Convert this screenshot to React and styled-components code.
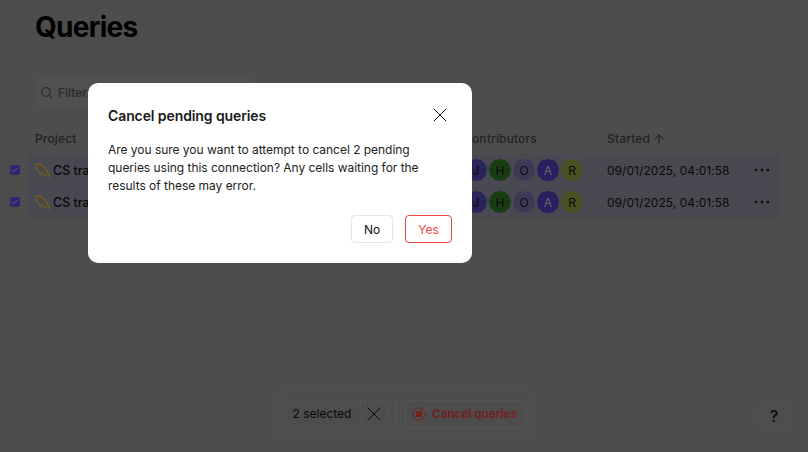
import React from 'react';
import styled, { createGlobalStyle } from 'styled-components';
import { ArrowUp, MoreHorizontal, Search, X, Check } from 'lucide-react';

const GlobalStyle = createGlobalStyle`
  html, body { margin: 0; padding: 0; height: 100%; overflow: hidden; background: #9a9a9a; }
  body { font-family: Inter, "Liberation Sans", sans-serif; color: #111; }
`;

const Page = styled.div`
  width: 808px;
  height: 452px;
  overflow: hidden;
  position: relative;
  background: #9a9a9a;
`;
const Title = styled.h1`
  margin: 0;
  padding: 10px 0 0 35px;
  font-size: 28px;
  line-height: 34px;
  font-weight: 700;
  letter-spacing: -0.7px;
  color: #000;
`;
const FilterBox = styled.div`
  margin: 34px 0 0 35px;
  width: 220px;
  height: 28px;
  box-sizing: border-box;
  display: flex;
  align-items: center;
  gap: 5px;
  padding-left: 5px;
  background: #a1a1a1;
  border-radius: 5px;
  font-size: 12px;
  font-weight: 500;
  color: #555;
`;
const HeaderRow = styled.div`
  display: grid;
  grid-template-columns: 428px 144px 1fr;
  margin-top: 23px;
  padding-left: 35px;
  height: 19px;
  align-items: center;
  font-size: 12px;
  font-weight: 500;
  letter-spacing: 0.15px;
  color: #444;
`;
const Started = styled.span`
  display: flex;
  align-items: center;
  gap: 2px;
  svg { color: #222; }
`;
const TableBody = styled.div`
  display: flex;
  margin-top: 6px;
`;
const Checks = styled.div`
  width: 27px;
  flex: none;
  display: flex;
  flex-direction: column;
`;
const CheckCell = styled.div`
  height: 32px;
  padding-left: 10px;
  display: flex;
  align-items: center;
`;
const CheckBox = styled.span`
  width: 10px;
  height: 10px;
  border-radius: 2px;
  background: #5a50e8;
  color: #ccc;
  display: flex;
  align-items: center;
  justify-content: center;
`;
const Rows = styled.div`
  width: 755px;
  background: #9292a2;
  border-radius: 5px;
`;
const Row = styled.div`
  display: grid;
  grid-template-columns: 428px 144px 1fr 32px;
  height: 32px;
  padding-left: 8px;
  align-items: center;
  font-size: 12px;
  color: #111;
`;
const NameCell = styled.div`
  display: flex;
  align-items: center;
  gap: 3px;
  font-weight: 500;
  font-size: 12.5px;
`;
const Avatars = styled.div`
  display: flex;
  margin-left: 1px;
`;
const Avatar = styled.span`
  width: 24px;
  height: 24px;
  box-sizing: border-box;
  border: 1px solid #9a9aa6;
  border-radius: 50%;
  background: ${(p) => p.$bg};
  color: ${(p) => p.$fg || '#111'};
  font-size: 12px;
  display: flex;
  align-items: center;
  justify-content: center;
`;
const DateCell = styled.span`
  font-size: 12px;
  letter-spacing: 0.05px;
`;
const MoreCell = styled.span`
  display: flex;
  margin-left: 2px;
  color: #111;
`;
const ActionBar = styled.div`
  position: absolute;
  left: 275px;
  bottom: 16px;
  height: 45px;
  width: 260px;
  box-sizing: border-box;
  display: flex;
  align-items: center;
  gap: 8px;
  padding: 0 7px;
  background: #9a9a9a;
  border: 1px solid #a2a2a2;
  border-radius: 10px;
`;
const SelectedGroup = styled.div`
  display: flex;
  align-items: stretch;
  height: 28px;
  box-sizing: border-box;
  border: 1px dashed #a8a8a8;
  border-radius: 5px;
  font-size: 12px;
  color: #111;
`;
const SelectedLabel = styled.span`
  width: 76px;
  display: flex;
  align-items: center;
  justify-content: center;
  border-right: 1px dashed #a8a8a8;
`;
const ClearButton = styled.span`
  width: 26px;
  box-sizing: border-box;
  padding-right: 1px;
  display: flex;
  align-items: center;
  justify-content: center;
  overflow: hidden;
`;
const Divider = styled.span`
  width: 1px;
  height: 28px;
  background: #a8a8a8;
`;
const CancelButton = styled.div`
  height: 28px;
  width: 122px;
  box-sizing: border-box;
  display: flex;
  align-items: center;
  gap: 6px;
  padding-left: 6px;
  border: 1px solid #a8a8a8;
  border-radius: 5px;
  font-size: 12px;
  font-weight: 600;
  letter-spacing: -0.15px;
  color: #e83c3c;
`;
const HelpButton = styled.div`
  position: absolute;
  right: 18px;
  bottom: 20px;
  width: 32px;
  height: 32px;
  box-sizing: border-box;
  border: 1px solid #a2a2a2;
  border-radius: 50%;
  display: flex;
  align-items: center;
  justify-content: center;
  font-size: 16px;
  font-weight: 500;
  color: #111;
`;
const Overlay = styled.div`
  position: fixed;
  inset: 0;
  background: rgba(0, 0, 0, 0.5);
  display: flex;
  align-items: flex-start;
  padding: 83px 0 0 88px;
`;
const Modal = styled.div`
  width: 384px;
  height: 180px;
  box-sizing: border-box;
  background: #fff;
  border-radius: 10px;
  padding: 24px 20px 20px;
  display: flex;
  flex-direction: column;
`;
const ModalHeader = styled.div`
  display: flex;
  justify-content: space-between;
  align-items: center;
  height: 18px;
`;
const ModalTitle = styled.h2`
  margin: 0;
  font-size: 14px;
  line-height: 18px;
  font-weight: 600;
  letter-spacing: -0.1px;
  color: #1a1a1a;
`;
const CloseButton = styled.span`
  display: flex;
  margin-top: -2px;
  color: #111;
`;
const ModalText = styled.p`
  margin: 16px 0 0;
  font-size: 12px;
  line-height: 18px;
  letter-spacing: -0.03px;
  color: #222;
`;
const ModalActions = styled.div`
  display: flex;
  justify-content: flex-end;
  gap: 12px;
  margin-top: auto;
`;
const Button = styled.button`
  height: 28px;
  padding: 0;
  width: ${(p) => (p.$danger ? '47px' : '42px')};
  background: #fff;
  border: 1px solid ${(p) => (p.$danger ? '#ef4444' : '#e6e6e6')};
  border-radius: 4px;
  font-family: inherit;
  font-size: 12px;
  color: ${(p) => (p.$danger ? '#ef4444' : '#111')};
`;

const contributors = [
  { name: 'J', bg: '#5048b4' },
  { name: 'H', bg: '#327824' },
  { name: 'O', bg: '#7c74ac' },
  { name: 'A', bg: '#5040c0', fg: '#ccc' },
  { name: 'R', bg: '#96a048' },
];

const LassoIcon = () => (
  <svg width="15" height="15" viewBox="0 0 15 15" fill="none">
    <path d="M0.8 1.2 C6 0 12 4 14.2 14 C10 11.5 4 11.5 2.5 7.5 C2 5.5 1.5 3.5 0.8 1.2 Z" stroke="#f0b828" strokeWidth="1.2" strokeLinejoin="round" />
    <path d="M3 3 C7 4 10 8 12 12" stroke="#b08a30" strokeWidth="0.8" strokeLinecap="round" />
  </svg>
);

const StopIcon = () => (
  <svg width="14" height="14" viewBox="0 0 14 14" fill="none">
    <circle cx="7" cy="7" r="6.2" stroke="#e83c3c" strokeWidth="1" />
    <rect x="4" y="4" width="6" height="6" rx="1" fill="#e83c3c" />
  </svg>
);

const QueryRow = () => (
  <Row>
    <NameCell>
      <LassoIcon />
      CS training
    </NameCell>
    <Avatars>
      {contributors.map((c) => (
        <Avatar key={c.name} $bg={c.bg} $fg={c.fg}>{c.name}</Avatar>
      ))}
    </Avatars>
    <DateCell>09/01/2025, 04:01:58</DateCell>
    <MoreCell><MoreHorizontal size={20} strokeWidth={1.3} /></MoreCell>
  </Row>
);

const RowCheck = () => (
  <CheckCell>
    <CheckBox><Check size={8} strokeWidth={2.5} /></CheckBox>
  </CheckCell>
);

export default function App() {
  return (
    <Page>
      <GlobalStyle />
      <Title>Queries</Title>
      <FilterBox>
        <Search size={13} />
        Filter
      </FilterBox>
      <HeaderRow>
        <span>Project</span>
        <span>Contributors</span>
        <Started>Started <ArrowUp size={14} strokeWidth={1.4} /></Started>
      </HeaderRow>
      <TableBody>
        <Checks>
          <RowCheck />
          <RowCheck />
        </Checks>
        <Rows>
          <QueryRow />
          <QueryRow />
        </Rows>
      </TableBody>
      <ActionBar>
        <SelectedGroup>
          <SelectedLabel>2 selected</SelectedLabel>
          <ClearButton><X size={24} strokeWidth={1} /></ClearButton>
        </SelectedGroup>
        <Divider />
        <CancelButton>
          <StopIcon />
          Cancel queries
        </CancelButton>
      </ActionBar>
      <HelpButton>?</HelpButton>
      <Overlay>
        <Modal>
          <ModalHeader>
            <ModalTitle>Cancel pending queries</ModalTitle>
            <CloseButton><X size={24} strokeWidth={1} /></CloseButton>
          </ModalHeader>
          <ModalText>
            Are you sure you want to attempt to cancel 2 pending queries using this connection? Any cells waiting for the results of these may error.
          </ModalText>
          <ModalActions>
            <Button>No</Button>
            <Button $danger>Yes</Button>
          </ModalActions>
        </Modal>
      </Overlay>
    </Page>
  );
}
